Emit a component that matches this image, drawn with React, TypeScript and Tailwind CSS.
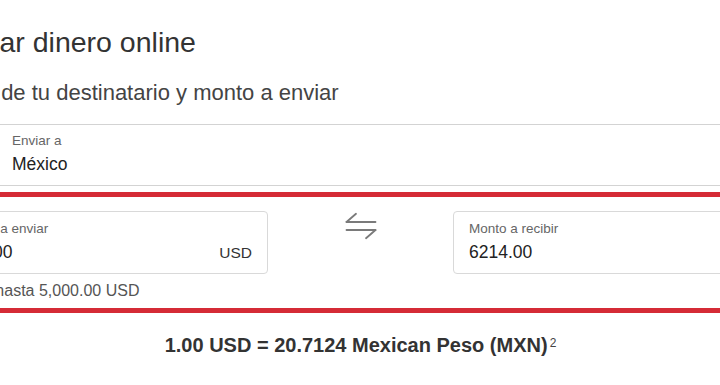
import React from "react";

function SwapIcon() {
  return (
    <svg width="32" height="28" viewBox="0 0 32 28" fill="none" stroke="#7a7a7a" strokeWidth="1.8" strokeLinecap="round">
      <path d="M1.5 10H30.5" />
      <path d="M1.5 10L11 1.8" />
      <path d="M1.5 18H30.5" />
      <path d="M30.5 18L21 26.2" />
    </svg>
  );
}

export default function App() {
  return (
    <div className="w-[720px] h-[385px] overflow-hidden bg-white" style={{ fontFamily: '"Liberation Sans", Arial, sans-serif' }}>
      <div className="w-[835px] ml-[-57px] pt-[26px]">
        <h1 className="pl-[1px] text-[28.5px] leading-[32px] font-normal text-[#333333] whitespace-nowrap">Enviar dinero online</h1>
        <p className="mt-[22px] pl-[8px] text-[22px] leading-[26px] text-[#444444] whitespace-nowrap">País de tu destinatario y monto a enviar</p>

        <div className="mt-[18px] h-[62px] border border-[#d3d3d3] pl-[68px] pt-[8px]">
          <div className="text-[13.5px] leading-[16px] text-[#666666]">Enviar a</div>
          <div className="mt-[5px] text-[17.5px] leading-[20px] text-[#222222]">México</div>
        </div>

        <div className="mt-[6px] h-[5px] bg-[#d52b36]" />

        <div className="mt-[14px] grid grid-cols-[325px_1fr_325px]">
          <div className="h-[63px] rounded-[4px] border border-[#d9d9d9] px-[15px] pt-[9px]">
            <div className="text-[13.5px] leading-[16px] text-[#666666]">Monto a enviar</div>
            <div className="mt-[5px] flex items-baseline justify-between">
              <span className="text-[17.5px] leading-[20px] text-[#222222]">300.00</span>
              <span className="text-[15.5px] leading-[20px] text-[#333333]">USD</span>
            </div>
          </div>
          <div className="flex justify-center pt-[1px]">
            <SwapIcon />
          </div>
          <div className="h-[63px] rounded-[4px] border border-[#d9d9d9] px-[15px] pt-[9px]">
            <div className="text-[13.5px] leading-[16px] text-[#666666]">Monto a recibir</div>
            <div className="mt-[5px] text-[17.5px] leading-[20px] text-[#222222]">6214.00</div>
          </div>
        </div>

        <p className="mt-[8px] pl-[7px] text-[16px] leading-[18px] text-[#555555] whitespace-nowrap">Envía hasta 5,000.00 USD</p>

        <div className="mt-[8px] h-[5px] bg-[#d52b36]" />

        <div className="mt-[20px] text-center text-[20px] leading-[24px] font-bold text-[#333333] whitespace-nowrap">
          1.00 USD = 20.7124 Mexican Peso (MXN)
          <sup className="ml-[2px] text-[12px] font-normal text-[#444444] relative top-[-5px]">2</sup>
        </div>
      </div>
    </div>
  );
}
